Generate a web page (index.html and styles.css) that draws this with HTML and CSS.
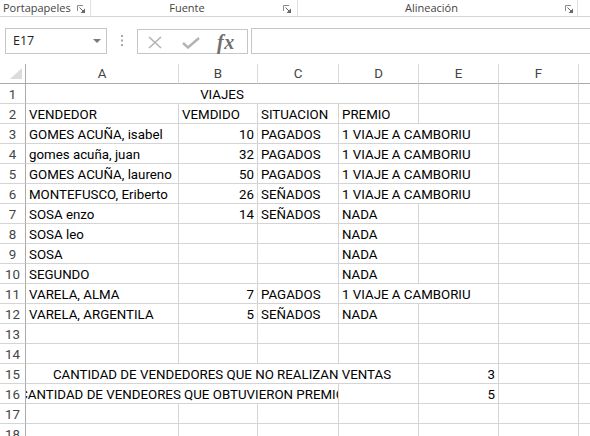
FILE: index.html
```html
<!DOCTYPE html>
<html lang="es">
<head>
<meta charset="utf-8">
<title>Viajes</title>
<link rel="stylesheet" href="styles.css">
</head>
<body>
<div class="ribbon">
  <div class="grp g1"><span class="lbl left">Portapapeles</span><svg class="launch" width="8" height="8" viewBox="0 0 8 8"><polyline points="0.5,6 0.5,0.5 6,0.5" fill="none" stroke="#8a8a8a" stroke-width="1"/><line x1="2.5" y1="2.5" x2="6.5" y2="6.5" stroke="#666" stroke-width="1"/><polygon points="8,3.5 8,8 3.5,8" fill="#666"/></svg></div>
  <div class="grp g2"><span class="lbl">Fuente</span><svg class="launch" width="8" height="8" viewBox="0 0 8 8"><polyline points="0.5,6 0.5,0.5 6,0.5" fill="none" stroke="#8a8a8a" stroke-width="1"/><line x1="2.5" y1="2.5" x2="6.5" y2="6.5" stroke="#666" stroke-width="1"/><polygon points="8,3.5 8,8 3.5,8" fill="#666"/></svg></div>
  <div class="grp g3"><span class="lbl">Alineación</span><svg class="launch" width="8" height="8" viewBox="0 0 8 8"><polyline points="0.5,6 0.5,0.5 6,0.5" fill="none" stroke="#8a8a8a" stroke-width="1"/><line x1="2.5" y1="2.5" x2="6.5" y2="6.5" stroke="#666" stroke-width="1"/><polygon points="8,3.5 8,8 3.5,8" fill="#666"/></svg></div>
  <div class="grp g4"></div>
</div>

<div class="fbar">
  <div class="namebox"><span>E17</span><svg class="dd" width="8" height="4" viewBox="0 0 8 4"><polygon points="0,0 8,0 4,4" fill="#7a7a7a"/></svg></div>
  <div class="dots"><svg width="2" height="11" viewBox="0 0 2 11"><rect x="0" y="0" width="2" height="2" fill="#a8a8a8"/><rect x="0" y="4.5" width="2" height="2" fill="#a8a8a8"/><rect x="0" y="9" width="2" height="2" fill="#a8a8a8"/></svg></div>
  <div class="btns">
    <svg class="ico-x" width="14" height="13" viewBox="0 0 14 13"><line x1="1" y1="1" x2="13" y2="12" stroke="#b3b3b3" stroke-width="1.6"/><line x1="13" y1="1" x2="1" y2="12" stroke="#b3b3b3" stroke-width="1.6"/></svg>
    <svg class="ico-ok" width="18" height="12" viewBox="0 0 18 12"><polyline points="1,6 6,10.5 17,1" fill="none" stroke="#b3b3b3" stroke-width="2.4"/></svg>
    <span class="fx">fx</span>
  </div>
  <div class="finput"></div>
</div>

<div class="sheet">
  <div class="corner"><svg width="12" height="11" viewBox="0 0 12 11"><polygon points="12,0 12,11 0,11" fill="#dcdcdc"/></svg></div>
  <div class="ch">A</div><div class="ch">B</div><div class="ch">C</div><div class="ch">D</div><div class="ch">E</div><div class="ch">F</div><div class="ch last"></div>

  <div class="rh">1</div><div class="c s4 ctr">VIAJES</div><div class="c"></div><div class="c"></div><div class="c"></div>

  <div class="rh">2</div><div class="c">VENDEDOR</div><div class="c">VEMDIDO</div><div class="c">SITUACION</div><div class="c">PREMIO</div><div class="c"></div><div class="c"></div><div class="c"></div>

  <div class="rh">3</div><div class="c">GOMES ACUÑA, isabel</div><div class="c r">10</div><div class="c">PAGADOS</div><div class="c s2">1 VIAJE A CAMBORIU</div><div class="c"></div><div class="c"></div>

  <div class="rh">4</div><div class="c">gomes acuña, juan</div><div class="c r">32</div><div class="c">PAGADOS</div><div class="c s2">1 VIAJE A CAMBORIU</div><div class="c"></div><div class="c"></div>

  <div class="rh">5</div><div class="c">GOMES ACUÑA, laureno</div><div class="c r">50</div><div class="c">PAGADOS</div><div class="c s2">1 VIAJE A CAMBORIU</div><div class="c"></div><div class="c"></div>

  <div class="rh">6</div><div class="c">MONTEFUSCO, Eriberto</div><div class="c r">26</div><div class="c">SEÑADOS</div><div class="c s2">1 VIAJE A CAMBORIU</div><div class="c"></div><div class="c"></div>

  <div class="rh">7</div><div class="c">SOSA enzo</div><div class="c r">14</div><div class="c">SEÑADOS</div><div class="c">NADA</div><div class="c"></div><div class="c"></div><div class="c"></div>

  <div class="rh">8</div><div class="c">SOSA leo</div><div class="c"></div><div class="c"></div><div class="c">NADA</div><div class="c"></div><div class="c"></div><div class="c"></div>

  <div class="rh">9</div><div class="c">SOSA</div><div class="c"></div><div class="c"></div><div class="c">NADA</div><div class="c"></div><div class="c"></div><div class="c"></div>

  <div class="rh">10</div><div class="c">SEGUNDO</div><div class="c"></div><div class="c"></div><div class="c">NADA</div><div class="c"></div><div class="c"></div><div class="c"></div>

  <div class="rh">11</div><div class="c">VARELA, ALMA</div><div class="c r">7</div><div class="c">PAGADOS</div><div class="c s2">1 VIAJE A CAMBORIU</div><div class="c"></div><div class="c"></div>

  <div class="rh">12</div><div class="c">VARELA, ARGENTILA</div><div class="c r">5</div><div class="c">SEÑADOS</div><div class="c">NADA</div><div class="c"></div><div class="c"></div><div class="c"></div>

  <div class="rh">13</div><div class="c"></div><div class="c"></div><div class="c"></div><div class="c"></div><div class="c"></div><div class="c"></div><div class="c"></div>

  <div class="rh">14</div><div class="c"></div><div class="c"></div><div class="c"></div><div class="c"></div><div class="c"></div><div class="c"></div><div class="c"></div>

  <div class="rh">15</div><div class="c s4 ctr">CANTIDAD DE VENDEDORES QUE NO REALIZAN VENTAS</div><div class="c r">3</div><div class="c"></div><div class="c"></div>

  <div class="rh">16</div><div class="c s3 ctr">CANTIDAD DE VENDEORES QUE OBTUVIERON PREMIO</div><div class="c"></div><div class="c r">5</div><div class="c"></div><div class="c"></div>

  <div class="rh">17</div><div class="c"></div><div class="c"></div><div class="c"></div><div class="c"></div><div class="c"></div><div class="c"></div><div class="c"></div>

  <div class="rh">18</div><div class="c"></div><div class="c"></div><div class="c"></div><div class="c"></div><div class="c"></div><div class="c"></div><div class="c"></div>
</div>
</body>
</html>
```

FILE: styles.css
```css
html, body {
  margin: 0;
  padding: 0;
}
body {
  width: 590px;
  height: 436px;
  overflow: hidden;
  background: #ffffff;
  font-family: Roboto, "Liberation Sans", Arial, sans-serif;
  color: #000;
}

/* ribbon group labels */
.ribbon {
  display: flex;
  height: 16px;
  border-bottom: 1px solid #d5d5d5;
  font-family: "Open Sans", "Liberation Sans", sans-serif;
  font-size: 11px;
  line-height: 16px;
  color: #444;
}
.grp {
  display: flex;
  align-items: center;
  box-sizing: border-box;
  border-right: 1px solid #e1e1e1;
  height: 16px;
  flex-shrink: 0;
}
.g1 { width: 91px; padding-right: 5px; }
.g2 { width: 207px; padding-right: 6px; }
.g3 { width: 280px; padding-right: 4px; }
.g4 { flex: 1; border-right: none; }
.lbl {
  flex: 1;
  text-align: center;
  white-space: nowrap;
}
.lbl.left {
  text-align: left;
  padding-left: 3px;
}
.launch {
  display: block;
  margin-top: 1px;
}

/* formula bar */
.fbar {
  display: flex;
  margin-top: 11px;
  height: 26px;
}
.namebox {
  flex-shrink: 0;
  margin-left: 5px;
  width: 102px;
  box-sizing: border-box;
  border: 1px solid #c6c6c6;
  display: flex;
  align-items: center;
  padding-left: 7px;
  padding-right: 5px;
  font-family: "Open Sans", "Liberation Sans", sans-serif;
  font-size: 12.5px;
  color: #222;
}
.namebox span { flex: 1; margin-top: -1px; }
.dd { display: block; }
.dots {
  flex-shrink: 0;
  width: 30px;
  display: flex;
  align-items: center;
  justify-content: center;
  padding-right: 1px;
  box-sizing: border-box;
}
.dots svg { display: block; margin-top: -1px; }
.btns {
  flex-shrink: 0;
  width: 111px;
  height: 25px;
  align-self: flex-end;
  box-sizing: border-box;
  border: 1px solid #c6c6c6;
  display: flex;
  align-items: center;
  padding-left: 10px;
}
.ico-x { display: block; margin-top: 1px; }
.ico-ok { display: block; margin-left: 20px; margin-top: 3px; }
.fx {
  margin-left: 17px;
  font-family: "Liberation Serif", "DejaVu Serif", serif;
  font-style: italic;
  font-weight: bold;
  font-size: 20px;
  color: #6f6f6f;
  line-height: 20px;
  letter-spacing: 0.5px;
}
.finput {
  flex-shrink: 0;
  margin-left: 3px;
  width: 400px;
  box-sizing: border-box;
  border: 1px solid #c6c6c6;
}

/* sheet grid */
.sheet {
  margin-top: 10px;
  display: grid;
  grid-template-columns: 26px 153px 79px 81px 80px 80px 80px 100px;
  grid-auto-rows: 20px;
  font-size: 13.3px;
  line-height: 21px;
}
.sheet > div {
  box-sizing: border-box;
  white-space: nowrap;
  overflow: hidden;
}
.corner {
  border-right: 1px solid #ababab;
  border-bottom: 1px solid #ababab;
  display: flex;
  align-items: flex-end;
  justify-content: flex-end;
  padding: 0 3px 4px 0;
}
.corner svg { display: block; }
.ch {
  border-right: 1px solid #dadada;
  border-bottom: 1px solid #ababab;
  text-align: center;
  color: #444;
  line-height: 20px;
}
.rh {
  border-right: 1px solid #ababab;
  border-bottom: 1px solid #d4d4d4;
  text-align: center;
  color: #444;
}
.c {
  border-right: 1px solid #d4d4d4;
  border-bottom: 1px solid #d4d4d4;
  padding: 0 3px;
}
.r { text-align: right; padding-right: 3px; }
.s2 { grid-column: span 2; }
.s3 { grid-column: span 3; }
.s4 { grid-column: span 4; }
.ctr {
  display: flex;
  justify-content: center;
  padding: 0;
}
```
